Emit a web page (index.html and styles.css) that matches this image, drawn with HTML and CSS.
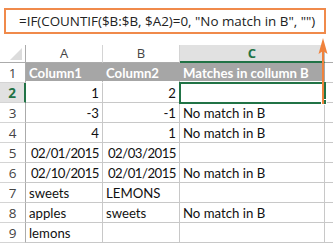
FILE: index.html
```html
<!DOCTYPE html>
<html>
<head>
<meta charset="utf-8">
<link rel="stylesheet" href="styles.css">
</head>
<body>
<div class="page">
  <div class="formula">=IF(COUNTIF($B:$B, $A2)=0, "No match in B", "")</div>
  <div class="sheet">
    <div class="hd corner"><span class="tri"></span></div>
    <div class="hd col">A</div>
    <div class="hd col">B</div>
    <div class="hd col sel-col">C</div>
    <div class="hd col last"></div>

    <div class="rh">1</div>
    <div class="c th">Column1</div>
    <div class="c th">Column2</div>
    <div class="c th">Matches in collumn B</div>
    <div class="c last"></div>

    <div class="rh sel-row">2</div>
    <div class="c num">1</div>
    <div class="c num">2</div>
    <div class="c active"><span class="handle"></span></div>
    <div class="c last"></div>

    <div class="rh">3</div>
    <div class="c num">-3</div>
    <div class="c num">-1</div>
    <div class="c">No match in B</div>
    <div class="c last"></div>

    <div class="rh">4</div>
    <div class="c num">4</div>
    <div class="c num">1</div>
    <div class="c">No match in B</div>
    <div class="c last"></div>

    <div class="rh">5</div>
    <div class="c num date">02/01/2015</div>
    <div class="c num date">02/03/2015</div>
    <div class="c"></div>
    <div class="c last"></div>

    <div class="rh">6</div>
    <div class="c num date">02/10/2015</div>
    <div class="c num date">02/01/2015</div>
    <div class="c">No match in B</div>
    <div class="c last"></div>

    <div class="rh">7</div>
    <div class="c">sweets</div>
    <div class="c">LEMONS</div>
    <div class="c"></div>
    <div class="c last"></div>

    <div class="rh">8</div>
    <div class="c">apples</div>
    <div class="c">sweets</div>
    <div class="c">No match in B</div>
    <div class="c last"></div>

    <div class="rh">9</div>
    <div class="c">lemons</div>
    <div class="c"></div>
    <div class="c"></div>
    <div class="c last"></div>
  </div>
  <svg class="arrow" width="12" height="68" viewBox="0 0 12 68">
    <line x1="6" y1="10" x2="6" y2="66" stroke="#f0823c" stroke-width="2"/>
    <path d="M6 0 L10.5 16 L6 13 L1.5 16 Z" fill="#f0823c"/>
  </svg>
</div>
</body>
</html>
```
FILE: styles.css
```css
html, body {
  margin: 0;
  padding: 0;
  background: #fff;
}
.page {
  position: relative;
  width: 333px;
  height: 244px;
  overflow: hidden;
}
.formula {
  box-sizing: border-box;
  margin: 8px 7px 0 4px;
  height: 26px;
  border: 2px solid #f08a4b;
  padding-left: 13px;
  font-family: "Open Sans", "Noto Sans", sans-serif;
  font-size: 13.4px;
  line-height: 22px;
  color: #222;
  white-space: nowrap;
}
.sheet {
  margin-top: 11px;
  display: grid;
  grid-template-columns: 26px 77px 77px 145px 1fr;
  grid-auto-rows: 20px;
  grid-template-rows: 18px;
  font-family: "Lato", "Liberation Sans", sans-serif;
  font-size: 13.2px;
}
.hd {
  box-sizing: border-box;
  border-right: 1px solid #d4d4d4;
  border-bottom: 1px solid #ababab;
  font-family: "Open Sans", "Noto Sans", sans-serif;
  font-size: 13px;
  color: #444;
  text-align: center;
  line-height: 17px;
}
.corner {
  position: relative;
  border-right-color: #ababab;
}
.tri {
  position: absolute;
  right: 3px;
  bottom: 2px;
  width: 0;
  height: 0;
  border-left: 12px solid transparent;
  border-bottom: 12px solid #dcdcdc;
}
.sel-col {
  background: #e1e1e1;
  color: #217346;
  font-weight: bold;
  border-bottom: 2px solid #217346;
  border-right-color: #bdbdbd;
}
.hd.last { border-right: none; }
.rh {
  box-sizing: border-box;
  border-right: 1px solid #ababab;
  border-bottom: 1px solid #d4d4d4;
  font-family: "Open Sans", "Noto Sans", sans-serif;
  font-size: 13.5px;
  color: #444;
  text-align: center;
  line-height: 20px;
}
.sel-row {
  background: #e1e1e1;
  color: #217346;
  font-weight: bold;
  border-right: 2px solid #217346;
}
.c {
  box-sizing: border-box;
  border-right: 1px solid #c8c8c8;
  border-bottom: 1px solid #c8c8c8;
  padding: 0 3px;
  line-height: 20px;
  color: #111;
  white-space: nowrap;
  overflow: hidden;
}
.c.last { border-right: none; }
.num { text-align: right; }
.date { letter-spacing: -0.5px; }
.th {
  background: #a6a6a6;
  color: #fff;
  font-weight: bold;
  border-bottom: 2px solid #fff;
  border-right-color: #a6a6a6;
}
.active {
  position: relative;
  overflow: visible;
  outline: 2px solid #217346;
  outline-offset: -1px;
}
.handle {
  position: absolute;
  right: -3px;
  bottom: -3px;
  width: 6px;
  height: 6px;
  background: #217346;
  border: 1px solid #fff;
  box-sizing: border-box;
}
.arrow {
  position: absolute;
  left: 317px;
  top: 38px;
}
```
